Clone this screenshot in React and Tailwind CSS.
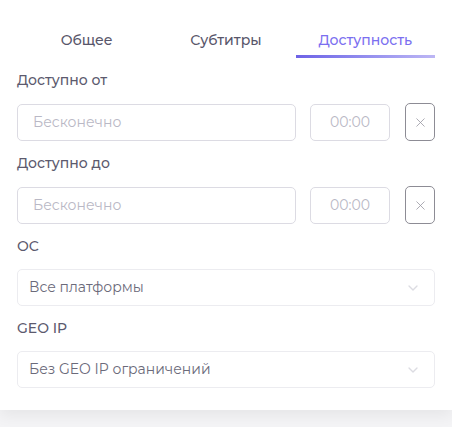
import { ChevronDown, X } from "lucide-react";

const FONT = "font-['Montserrat','Inter','Noto_Sans',sans-serif]";

const TABS = [
  { label: "Общее", active: false },
  { label: "Субтитры", active: false },
  { label: "Доступность", active: true },
];

function Label({ children }) {
  return <div className="h-5 text-[14px] font-medium leading-5 text-[#5c5a6e]">{children}</div>;
}

function DateRow() {
  return (
    <div className="mt-[13px] flex items-center">
      <div className="flex h-[37px] w-[279px] items-center rounded-[5px] border border-[#dcdbe3] px-[15px] text-[14px] text-[#b9b8c5]">
        Бесконечно
      </div>
      <div className="ml-[14px] flex h-[37px] w-[80px] items-center justify-center rounded-[5px] border border-[#dcdbe3] text-[14px] text-[#b9b8c5]">
        00:00
      </div>
      <button className="ml-[15px] flex h-[38px] w-[30px] items-center justify-center rounded-[5px] border border-[#8d8c95] text-[#9a99a3]">
        <X className="h-[15px] w-[15px]" strokeWidth={1.3} />
      </button>
    </div>
  );
}

function Select({ value }) {
  return (
    <div className="mt-[13px] flex h-[37px] items-center justify-between rounded-[5px] border border-[#ececf0] pl-[11px] pr-[13px] text-[14px] text-[#6b6a7a]">
      <span>{value}</span>
      <ChevronDown className="h-[16px] w-[16px] text-[#dcdce2]" strokeWidth={2} />
    </div>
  );
}

export default function App() {
  return (
    <div className={`h-[427px] w-[452px] bg-[#f4f4f6] ${FONT}`}>
      <div className="bg-white px-[17px] pt-[22px] pb-[22px] shadow-[0_6px_14px_rgba(0,0,0,0.06)]">
        <div className="flex">
          {TABS.map((t) => (
            <div key={t.label} className="flex flex-1 flex-col items-center">
              <div className={`h-[33px] text-[14px] font-medium leading-[36px] ${t.active ? "text-[#7b6ff0]" : "text-[#58566a]"}`}>
                {t.label}
              </div>
              <div
                className={`h-[3px] w-full ${t.active ? "bg-gradient-to-r from-[#6e62e6] to-[#bdb6f4]" : "bg-transparent"}`}
              />
            </div>
          ))}
        </div>

        <div className="mt-[12px]">
          <Label>Доступно от</Label>
          <DateRow />
        </div>
        <div className="mt-[12px]">
          <Label>Доступно до</Label>
          <DateRow />
        </div>
        <div className="mt-[12px]">
          <Label>ОС</Label>
          <Select value="Все платформы" />
        </div>
        <div className="mt-[12px]">
          <Label>GEO IP</Label>
          <Select value="Без GEO IP ограничений" />
        </div>
      </div>
    </div>
  );
}
